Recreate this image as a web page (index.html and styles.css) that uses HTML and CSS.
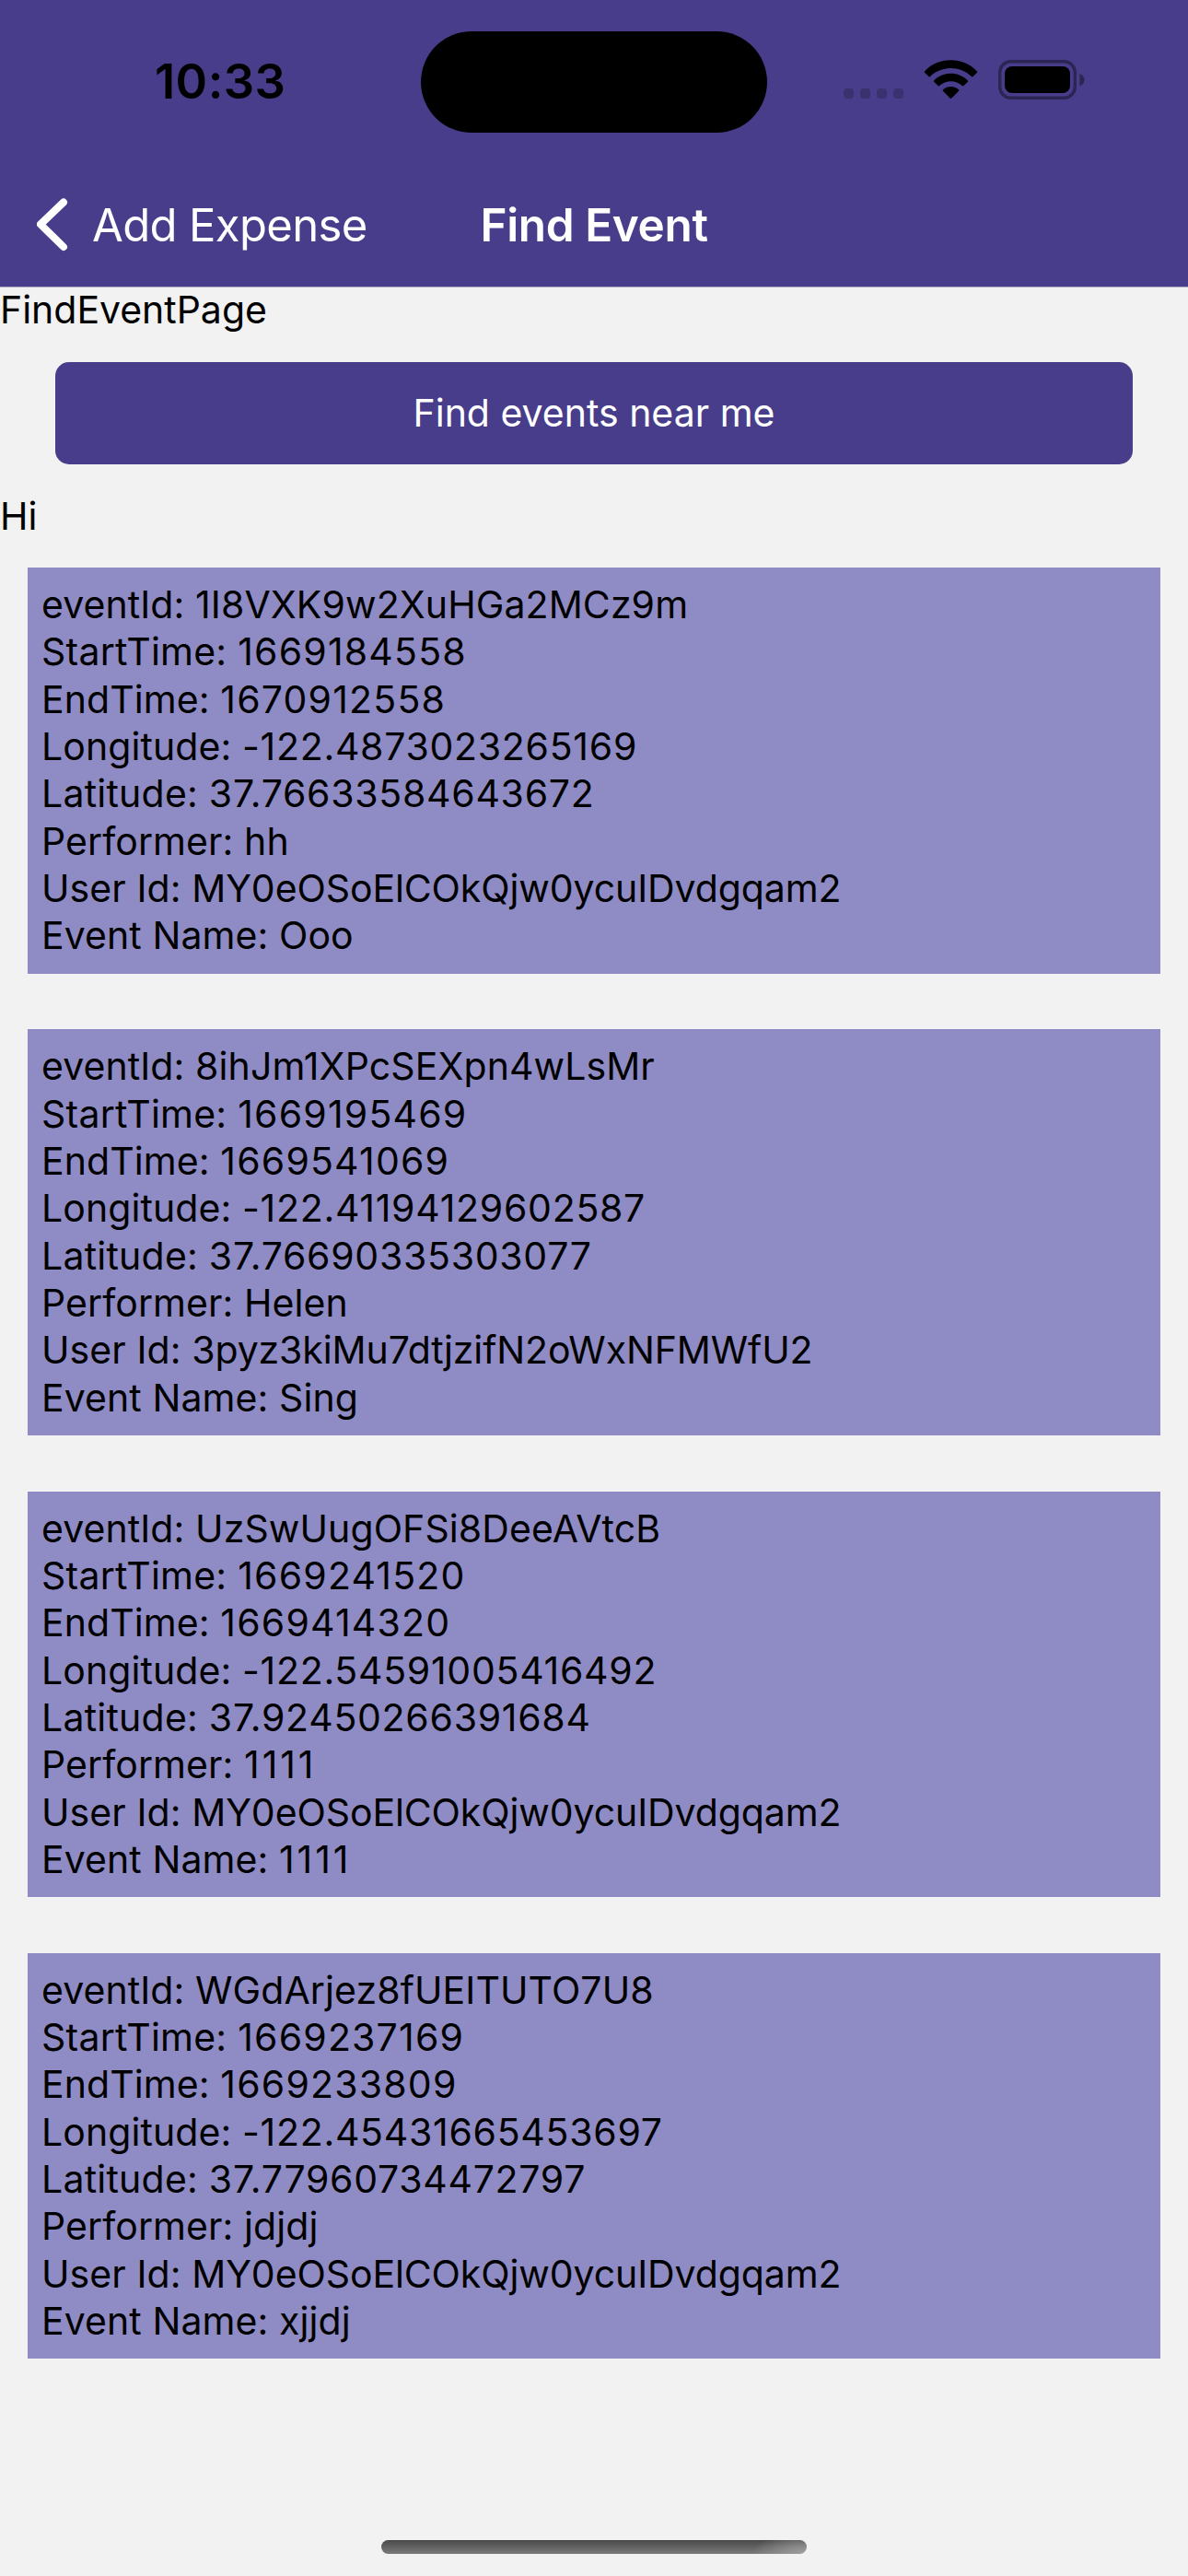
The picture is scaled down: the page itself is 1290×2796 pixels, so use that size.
FILE: index.html
```html
<!DOCTYPE html>
<html lang="en">
<head>
<meta charset="utf-8">
<title>Find Event</title>
<link rel="stylesheet" href="styles.css">
</head>
<body>
<header class="header">
  <div class="status-bar">
    <div class="clock">10:33</div>
    <div class="island"></div>
    <div class="indicators">
      <svg width="264" height="50" viewBox="914 62 264 50" aria-hidden="true">
        <g fill="#3a316f">
          <rect x="916" y="96" width="11" height="11" rx="4"/>
          <rect x="934" y="96" width="11" height="11" rx="4"/>
          <rect x="952" y="96" width="11" height="11" rx="4"/>
          <rect x="970" y="96" width="11" height="11" rx="4"/>
        </g>
        <path d="M1004.3 77.2C1018.5 61.1 1046.500 61.1 1060.700 77.2Q1061.600 78.200 1060.700 79.100L1056.600 83.100Q1055.800 83.900 1054.900 83C1042.500 70.900 1022.500 70.900 1010.100 83Q1009.200 83.900 1008.400 83.100L1004.300 79.100Q1003.400 78.200 1004.300 77.200Z"/>
        <path d="M1014.300 87.200C1024 77.200 1041 77.200 1050.700 87.200Q1051.600 88.100 1050.700 89L1046.500 93.100Q1045.700 93.900 1044.800 93.100C1038 86.700 1027 86.700 1020.200 93.100Q1019.300 93.900 1018.500 93.100L1014.300 89Q1013.400 88.100 1014.300 87.200Z"/>
        <path d="M1024.200 97.300C1028.800 92.900 1036.200 92.900 1040.800 97.300Q1041.700 98.200 1040.800 99.100L1033.400 106.500Q1032.500 107.400 1031.600 106.500L1024.200 99.100Q1023.300 98.200 1024.200 97.300Z"/>
        <rect x="1085.700" y="66.700" width="81.600" height="39.600" rx="12" fill="none" stroke="#2c2553" stroke-width="3.400"/>
        <rect x="1091" y="72" width="71" height="29" rx="8"/>
        <path d="M1172.300 80C1179.200 82.500 1179.200 91 1172.300 93.500Z" fill="#2c2553"/>
      </svg>
    </div>
  </div>
  <nav class="nav-bar">
    <a class="back">
      <svg class="chevron" width="34" height="58" viewBox="0 0 34 58" aria-hidden="true"><path d="M29 4.500L4 28.500L29 53" fill="none" stroke="#fff" stroke-width="8" stroke-linecap="round" stroke-linejoin="round"/></svg>
      <span class="back-label">Add Expense</span>
    </a>
    <h1 class="title">Find Event</h1>
    <span></span>
  </nav>
</header>
<main class="page">
  <p>FindEventPage</p>
  <button class="find-button">Find events near me</button>
  <p>Hi</p>
  <section class="events">
    <article class="event">
      <p>eventId: <span class="id">1I8VXK9w2XuHGa2MCz9m</span></p>
      <p><span class="wide">StartTime: </span><span class="time">1669184558</span></p>
      <p>EndTime: <span class="time">1670912558</span></p>
      <p>Longitude: <span class="coord">-122.4873023265169</span></p>
      <p><span class="wide">Latitude: </span><span class="coord">37.76633584643672</span></p>
      <p>Performer: hh</p>
      <p>User Id: <span class="user">MY0eOSoElCOkQjw0ycuIDvdgqam2</span></p>
      <p>Event Name: Ooo</p>
    </article>
    <article class="event">
      <p>eventId: <span class="id">8ihJm1XPcSEXpn4wLsMr</span></p>
      <p><span class="wide">StartTime: </span><span class="time">1669195469</span></p>
      <p>EndTime: <span class="time">1669541069</span></p>
      <p>Longitude: <span class="coord">-122.41194129602587</span></p>
      <p><span class="wide">Latitude: </span><span class="coord">37.76690335303077</span></p>
      <p>Performer: Helen</p>
      <p>User Id: <span class="user">3pyz3kiMu7dtjzifN2oWxNFMWfU2</span></p>
      <p>Event Name: Sing</p>
    </article>
    <article class="event">
      <p>eventId: <span class="id">UzSwUugOFSi8DeeAVtcB</span></p>
      <p><span class="wide">StartTime: </span><span class="time">1669241520</span></p>
      <p>EndTime: <span class="time">1669414320</span></p>
      <p>Longitude: <span class="coord">-122.54591005416492</span></p>
      <p><span class="wide">Latitude: </span><span class="coord">37.92450266391684</span></p>
      <p>Performer: <span class="ones">1111</span></p>
      <p>User Id: <span class="user">MY0eOSoElCOkQjw0ycuIDvdgqam2</span></p>
      <p>Event Name: <span class="ones">1111</span></p>
    </article>
    <article class="event">
      <p>eventId: <span class="id">WGdArjez8fUEITUTO7U8</span></p>
      <p><span class="wide">StartTime: </span><span class="time">1669237169</span></p>
      <p>EndTime: <span class="time">1669233809</span></p>
      <p>Longitude: <span class="coord">-122.45431665453697</span></p>
      <p><span class="wide">Latitude: </span><span class="coord">37.77960734472797</span></p>
      <p>Performer: jdjdj</p>
      <p>User Id: <span class="user">MY0eOSoElCOkQjw0ycuIDvdgqam2</span></p>
      <p>Event Name: xjjdj</p>
    </article>
  </section>
</main>
<footer class="home"><div class="home-indicator"></div></footer>
</body>
</html>
```
FILE: styles.css
```css
* {
  box-sizing: border-box;
}

body {
  margin: 0;
  height: 2796px;
  display: flex;
  flex-direction: column;
  overflow: hidden;
  background: #f2f2f2;
  color: #000;
  font: 400 41px/51.333px Inter, "Liberation Sans", sans-serif;
  letter-spacing: -0.020px;
}

p,
h1 {
  margin: 0;
}

.header {
  height: 312px;
  flex: none;
  background: #483d8b;
  border-bottom: 1px solid #a7a3bd;
}

.status-bar {
  height: 177px;
  display: grid;
  grid-template-columns: 457px 376px 1fr;
}

.clock {
  padding: 57px 0 0 168px;
  font-size: 52.500px;
  font-weight: 600;
  line-height: 62px;
  letter-spacing: 0.400px;
}

.island {
  height: 110.500px;
  margin-top: 33.500px;
  border-radius: 56px;
  background: #000;
}

.indicators {
  padding: 62px 0 0 81px;
}

.indicators svg,
.chevron {
  display: block;
}

.nav-bar {
  height: 134px;
  display: grid;
  grid-template-columns: 1fr auto 1fr;
  align-items: center;
  color: #fff;
  font-size: 49.500px;
  line-height: 60px;
}

.back {
  display: flex;
  align-items: center;
  gap: 26px;
  padding-left: 40px;
  font-size: 49px;
  letter-spacing: -0.650px;
}

.back-label {
  padding-top: 2px;
}

.title {
  font-size: 49.500px;
  font-weight: 600;
  letter-spacing: -0.380px;
}

.page {
  flex: 1;
  display: flex;
  flex-direction: column;
  margin-top: -1px;
}

.find-button {
  height: 111px;
  margin: 30.667px 60px;
  padding: 0;
  border: 0;
  border-radius: 15px;
  background: #483d8b;
  color: #fff;
  font: inherit;
  letter-spacing: 0;
}

.events {
  display: flex;
  flex-direction: column;
  gap: 60.667px;
  margin: 30px 30px 0;
}

.event {
  padding: 15px;
  background: #8f8bc4;
  letter-spacing: 0.080px;
}

.id {
  letter-spacing: 0.100px;
}

.wide {
  letter-spacing: 0.230px;
}

.time {
  letter-spacing: 1.200px;
}

.coord {
  letter-spacing: 0.720px;
}

.user {
  letter-spacing: -0.100px;
}

.ones {
  letter-spacing: 2.900px;
}

.home {
  height: 39px;
  flex: none;
}

.home-indicator {
  width: 462px;
  height: 15px;
  margin: 0 auto;
  border-radius: 8px;
  background:
    radial-gradient(ellipse 60px 24px at 100% 100%, rgba(165, 165, 165, 0.9), rgba(165, 165, 165, 0)),
    linear-gradient(#484a48, #7a7a7a);
}
```
